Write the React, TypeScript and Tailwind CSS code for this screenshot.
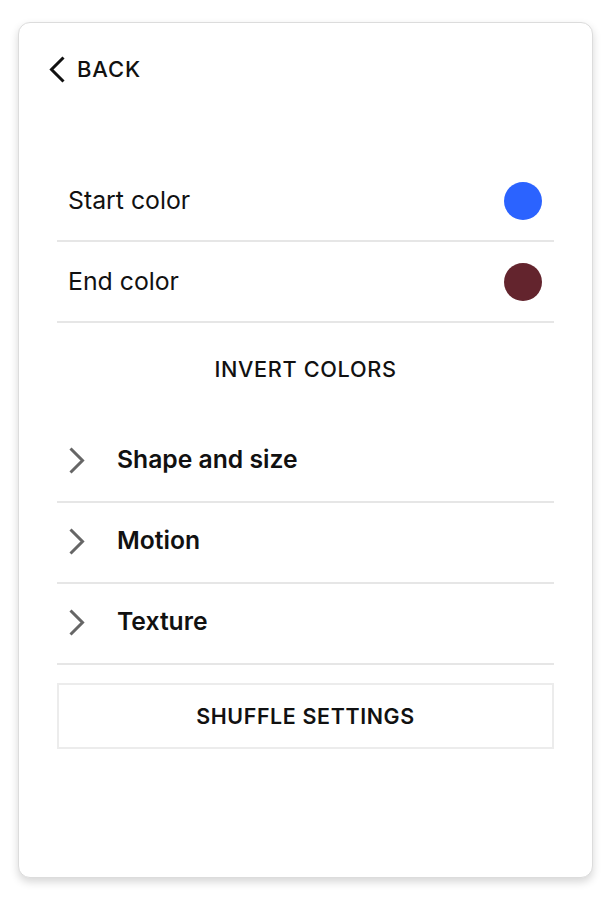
import React from "react";

function Chevron({ dir, className }: { dir: "left" | "right"; className?: string }) {
  return (
    <svg className={className} viewBox="0 0 18 27" fill="none" stroke="currentColor" strokeWidth={3} strokeLinecap="butt" strokeLinejoin="miter">
      {dir === "left" ? <path d="M15.5 1.5 L3.5 13.5 L15.5 25.5" /> : <path d="M2.5 1.5 L14.5 13.5 L2.5 25.5" />}
    </svg>
  );
}

const sections = ["Shape and size", "Motion", "Texture"];

export default function App() {
  return (
    <div className="min-h-screen bg-white pt-[22px] pl-[18px]" style={{ fontFamily: "Inter, 'Noto Sans', sans-serif" }}>
      <div className="w-[575px] h-[856px] rounded-[12px] border border-[#dcdcdc] bg-white shadow-[0_4px_9px_rgba(0,0,0,0.16)] text-[#111]">
        {/* Back */}
        <button className="flex items-center gap-[11px] ml-[29px] mt-[32px] h-[28px]">
          <Chevron dir="left" className="w-[18px] h-[27px] text-[#111]" />
          <span className="text-[22px] font-medium tracking-[0.04em]">BACK</span>
        </button>

        <div className="px-[38px] mt-[78px]">
          {/* Colors */}
          <div className="flex items-center justify-between h-[81px] border-b-2 border-[#e6e6e6] pl-[11px] pr-[12px]">
            <span className="text-[24.8px]">Start color</span>
            <span className="w-[38px] h-[38px] rounded-full bg-[#2b63ff]" />
          </div>
          <div className="flex items-center justify-between h-[81px] border-b-2 border-[#e6e6e6] pl-[11px] pr-[12px]">
            <span className="text-[24.8px]">End color</span>
            <span className="w-[38px] h-[38px] rounded-full bg-[#63242d]" />
          </div>

          <button className="w-full h-[99px] pb-[7px] flex items-center justify-center text-[21.7px] font-medium tracking-[0.03em]">
            INVERT COLORS
          </button>

          {/* Accordion */}
          {sections.map((s) => (
            <div key={s} className="flex items-center h-[81px] border-b-2 border-[#e6e6e6] pl-[11px] pb-[3px]">
              <Chevron dir="right" className="w-[18px] h-[27px] text-[#666]" />
              <span className="ml-[31px] text-[24.7px] font-semibold">{s}</span>
            </div>
          ))}

          <button className="mt-[18px] w-full h-[66px] border-2 border-[#ececec] flex items-center justify-center text-[21.4px] font-semibold tracking-[0.03em]">
            SHUFFLE SETTINGS
          </button>
        </div>
      </div>
    </div>
  );
}
